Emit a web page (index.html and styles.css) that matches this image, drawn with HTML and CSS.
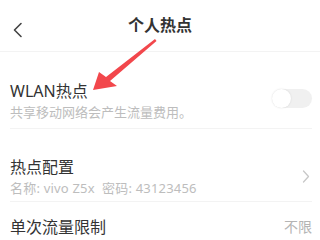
FILE: index.html
```html
<!DOCTYPE html>
<html lang="zh-CN">
<head>
  <meta charset="UTF-8">
  <meta name="viewport" content="width=device-width, initial-scale=1.0">
  <title>个人热点</title>
  <link rel="stylesheet" href="styles.css">
</head>
<body>
  <div class="page">
    <header class="topbar">
      <svg class="back" width="12" height="16" viewBox="0 0 12 16">
        <path d="M9 1.5 L2.5 8 L9 14.5" fill="none" stroke="#444" stroke-width="1.6" stroke-linecap="round" stroke-linejoin="round"/>
      </svg>
      <h1>个人热点</h1>
    </header>

    <div class="row first">
      <div class="row-text">
        <div class="row-title">WLAN热点</div>
        <div class="row-sub">共享移动网络会产生流量费用。</div>
      </div>
      <div class="switch"><span class="knob"></span></div>
    </div>

    <div class="row second">
      <div class="row-text">
        <div class="row-title">热点配置</div>
        <div class="row-sub wide">名称: vivo Z5x &nbsp;密码: 43123456</div>
      </div>
      <svg class="chevron" width="8" height="13" viewBox="0 0 8 13">
        <path d="M1.5 1 L6.5 6.5 L1.5 12" fill="none" stroke="#c8c8c8" stroke-width="1.3" stroke-linecap="round" stroke-linejoin="round"/>
      </svg>
    </div>

    <div class="row last">
      <div class="row-title">单次流量限制</div>
      <div class="row-value">不限</div>
    </div>

    <!-- red annotation arrow -->
    <svg class="pointer" width="320" height="240" viewBox="0 0 320 240">
      <polygon points="93,90 99,72 106,77 155,39 156.5,41 110,81 117,86" fill="#f2474c"/>
    </svg>
  </div>
</body>
</html>
```

FILE: styles.css
```css
* {
  box-sizing: border-box;
}
html, body {
  margin: 0;
  padding: 0;
  background: #fff;
}
body {
  font-family: "Noto Sans", "Noto Sans CJK SC", sans-serif;
  color: #333;
}
.page {
  position: relative;
  width: 320px;
  height: 240px;
  overflow: hidden;
}
.topbar {
  height: 52px;
  display: flex;
  align-items: center;
  justify-content: center;
  position: relative;
  border-bottom: 1px solid #f3f3f3;
}
.topbar h1 {
  margin: 0 0 2px 0;
  font-size: 16px;
  font-weight: 700;
  color: #333;
  line-height: 20px;
}
.back {
  position: absolute;
  left: 12px;
  top: 22px;
}
.row {
  display: flex;
  align-items: center;
  justify-content: space-between;
  margin: 0 8px 0 10px;
}
.row.first {
  padding: 29px 0 7px;
  border-bottom: 1px solid #f3f3f3;
}
.row.second {
  padding: 28px 0 4px;
  border-bottom: 1px solid #f3f3f3;
}
.row.last {
  padding: 15px 0 0;
}
.row-title {
  font-size: 16px;
  line-height: 20px;
  color: #333;
}
.row-sub {
  margin-top: 2px;
  font-size: 13px;
  line-height: 18px;
  color: #bdbdbd;
}
.row-sub.wide {
  letter-spacing: 0.2px;
}
.row-value {
  font-size: 14px;
  line-height: 20px;
  color: #b4b4b4;
}
.switch {
  width: 40px;
  height: 19px;
  border-radius: 10px;
  background: #f0f0f0;
  position: relative;
  margin-top: -6px;
}
.knob {
  position: absolute;
  left: 0;
  top: 0;
  width: 19px;
  height: 19px;
  border-radius: 50%;
  background: #fff;
  box-shadow: 0 0 2px rgba(0, 0, 0, 0.12);
}
.chevron {
  margin-top: -2px;
  margin-right: 2px;
}
.pointer {
  position: absolute;
  left: 0;
  top: 0;
  pointer-events: none;
}
```
